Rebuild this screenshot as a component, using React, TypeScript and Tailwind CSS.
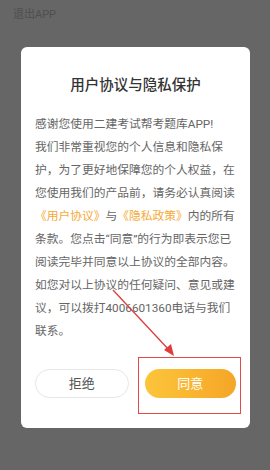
import React from "react";

const Link: React.FC<{ children: React.ReactNode }> = ({ children }) => (
  <span className="text-[#f6a935]">{children}</span>
);

const App: React.FC = () => {
  return (
    <div
      className="relative w-[270px] h-[470px] bg-[#666666] overflow-hidden"
      style={{ fontFamily: 'Roboto, "Noto Sans CJK SC", sans-serif' }}>
      {/* Top bar (dimmed) */}
      <div className="pl-[13px] pt-[8px] h-[47px] text-[11px] leading-[14px] text-[#4f4f4f]">
        退出APP
      </div>

      {/* Dialog */}
      <div className="mx-[21px] w-[229px] bg-white rounded-[6px] px-[14px] pt-[29px] pb-[30px]">
        <h2 className="text-center text-[14.5px] leading-[20px] font-medium text-[#333333]">
          用户协议与隐私保护
        </h2>

        <div className="mt-[17px] text-[11.75px] leading-[23px] text-[#666666]">
          <p>感谢您使用二建考试帮考题库APP!</p>
          <p>
            我们非常重视您的个人信息和隐私保护，为了更好地保障您的个人权益，在您使用我们的产品前，请务必认真阅读
            <Link>《用户协议》</Link>与<Link>《隐私政策》</Link>
            内的所有条款。您点击“同意”的行为即表示您已阅读完毕并同意以上协议的全部内容。
          </p>
          <p>如您对以上协议的任何疑问、意见或建议，可以拨打4006601360电话与我们联系。</p>
        </div>

        <div className="mt-[26px] flex gap-[16px]">
          <button className="flex-1 h-[29px] rounded-full border border-[#e6e6e6] bg-white text-[13px] text-[#555555]">
            拒绝
          </button>
          <div className="relative flex-1">
            <button className="w-full h-[29px] rounded-full bg-gradient-to-r from-[#fcc53b] to-[#f5a626] text-[13px] text-white">
              同意
            </button>
            {/* annotation box */}
            <div className="absolute -left-[7px] -right-[5px] -top-[12px] -bottom-[16px] border-[1.5px] border-[#e24a4a]" />
          </div>
        </div>
      </div>

      {/* annotation arrow */}
      <svg
        className="absolute left-0 top-0 pointer-events-none"
        width="270"
        height="470"
        viewBox="0 0 270 470">
        <line x1="113" y1="290" x2="170" y2="351" stroke="#e03c3c" strokeWidth="1.3" />
        <polygon points="174,356 164,350 171,344" fill="#e03c3c" />
      </svg>
    </div>
  );
};

export default App;
